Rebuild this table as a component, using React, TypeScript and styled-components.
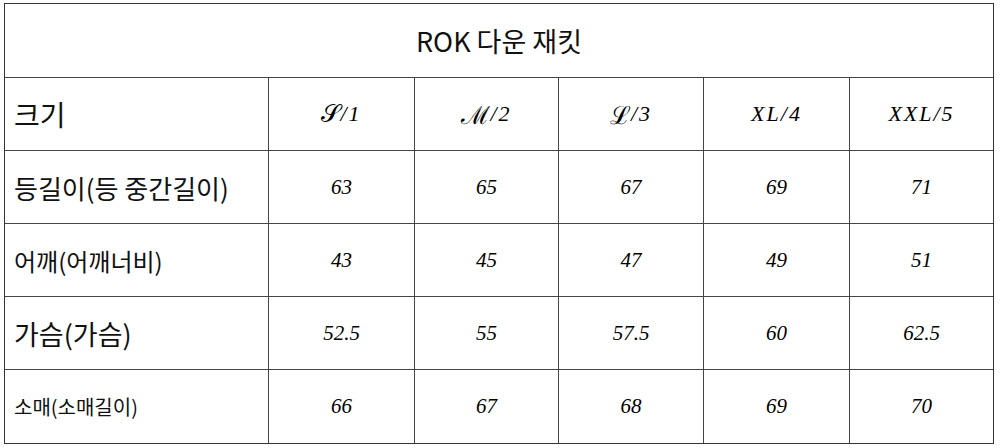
import styled, { createGlobalStyle } from 'styled-components';

const GlobalStyle = createGlobalStyle`
  html, body {
    margin: 0;
    padding: 0;
    background: #ffffff;
  }
`;

const Page = styled.div`
  width: 1000px;
  height: 448px;
  padding: 3px 0 0 4px;
  box-sizing: border-box;
  background: #ffffff;
`;

const Table = styled.div`
  width: 990px;
  border: 1.5px solid #333;
  box-sizing: border-box;
`;

const Title = styled.div`
  height: 73px;
  display: flex;
  align-items: center;
  justify-content: center;
  border-bottom: 1.5px solid #444;
  font-family: 'Noto Sans CJK KR', 'Noto Sans', sans-serif;
  font-size: 27px;
  color: #111;
`;

const Grid = styled.div`
  display: grid;
  grid-template-columns: 264px 146px 144px 145px 146px 1fr;
  grid-auto-rows: 73px;
`;

const Cell = styled.div<{ $last?: boolean; $bottom?: boolean }>`
  display: flex;
  align-items: center;
  justify-content: center;
  border-right: ${p => (p.$last ? 'none' : '1.5px solid #444')};
  border-bottom: ${p => (p.$bottom ? 'none' : '1.5px solid #444')};
  box-sizing: border-box;
  font-family: 'Liberation Serif', 'DejaVu Serif', serif;
  font-style: italic;
  font-size: 21px;
  color: #000;
`;

const SizeCell = styled(Cell)`
  font-size: 22px;
  letter-spacing: 2px;
`;

const Script = styled.span`
  font-size: 25px;
  font-style: normal;
  letter-spacing: 0;
`;

const Label = styled(Cell)<{ $size: number }>`
  justify-content: flex-start;
  padding-left: 9px;
  font-family: 'Noto Sans CJK KR', 'Noto Sans', sans-serif;
  font-style: normal;
  font-size: ${p => p.$size}px;
  color: #111;
`;

const sizes: [string, string][] = [
  ['𝒮', '/1'],
  ['ℳ', '/2'],
  ['ℒ', '/3'],
  ['', 'XL/4'],
  ['', 'XXL/5'],
];

const rows: { label: string; size: number; values: string[] }[] = [
  { label: '등길이(등 중간길이)', size: 26, values: ['63', '65', '67', '69', '71'] },
  { label: '어깨(어깨너비)', size: 24, values: ['43', '45', '47', '49', '51'] },
  { label: '가슴(가슴)', size: 27, values: ['52.5', '55', '57.5', '60', '62.5'] },
  { label: '소매(소매길이)', size: 20, values: ['66', '67', '68', '69', '70'] },
];

const App = () => (
  <Page>
    <GlobalStyle />
    <Table>
      <Title>ROK 다운 재킷</Title>
      <Grid>
        <Label $size={28}>크기</Label>
        {sizes.map(([script, rest], i) => (
          <SizeCell key={rest} $last={i === sizes.length - 1}>
            {script && <Script>{script}</Script>}
            {rest}
          </SizeCell>
        ))}
        {rows.map((r, ri) => {
          const bottom = ri === rows.length - 1;
          return [
            <Label key={r.label} $size={r.size} $bottom={bottom}>{r.label}</Label>,
            ...r.values.map((v, i) => (
              <Cell key={r.label + i} $last={i === r.values.length - 1} $bottom={bottom}>{v}</Cell>
            )),
          ];
        })}
      </Grid>
    </Table>
  </Page>
);

export default App;
